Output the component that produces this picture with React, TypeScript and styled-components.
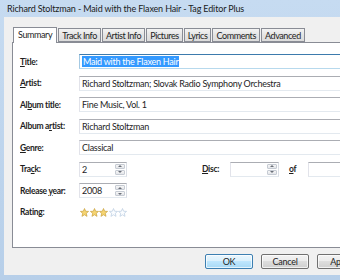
import styled, { createGlobalStyle } from 'styled-components';

const GlobalStyle = createGlobalStyle`
  html, body {
    margin: 0;
    padding: 0;
    width: 340px;
    height: 280px;
    overflow: hidden;
    background: #b9d1ea;
  }
  * { box-sizing: border-box; }
`;

const Window = styled.div`
  width: 340px;
  height: 280px;
  display: flex;
  flex-direction: column;
  overflow: hidden;
  background: linear-gradient(#c6dbf1, #b7cfe9);
  font-family: Lato, "Noto Sans", sans-serif;
  font-size: 9px;
  letter-spacing: -0.25px;
  color: #1e1e1e;
`;

const TitleBar = styled.div`
  height: 17px;
  flex: none;
  padding: 3px 0 0 7px;
  font-size: 9px;
  letter-spacing: -0.15px;
  color: #1b1b1b;
  white-space: nowrap;
`;

const Body = styled.div`
  margin-left: 4px;
  width: 400px;
  height: 258px;
  background: #f0f0f0;
  display: flex;
  flex-direction: column;
  padding: 9px 0 0 8px;
`;

const TabStrip = styled.div`
  display: flex;
  align-items: flex-end;
  height: 16px;
  padding-left: 1px;
  position: relative;
  z-index: 1;
`;

const Tab = styled.div<{ $active?: boolean }>`
  height: ${(p) => (p.$active ? '16px' : '14px')};
  margin-bottom: ${(p) => (p.$active ? '-1px' : '0')};
  margin-right: 1px;
  padding: ${(p) => (p.$active ? '1px 4px 0' : '1px 3px 0')};
  border: 1px solid #898c95;
  border-bottom: ${(p) => (p.$active ? 'none' : '1px solid #898c95')};
  background: ${(p) => (p.$active ? '#fff' : 'linear-gradient(#f3f3f3, #e4e4e4 50%, #dcdcdc)')};
  white-space: nowrap;
  line-height: 12px;
  letter-spacing: -0.4px;
  color: #1e1e1e;
`;

const Panel = styled.div`
  width: 380px;
  height: 206px;
  background: #fff;
  border: 1px solid #898c95;
  padding: 11px 0 0 7px;
`;

const Form = styled.div`
  display: grid;
  grid-template-columns: 59px 1fr;
  row-gap: 6.5px;
  align-items: center;
`;

const Label = styled.div`
  font-weight: 700;
  font-size: 8.5px;
  letter-spacing: -0.3px;
  color: #1e1e1e;
  white-space: nowrap;
  u { text-decoration: underline; }
`;

const Field = styled.div<{ $focused?: boolean }>`
  height: 15px;
  border: 1px solid ${(p) => (p.$focused ? '#3d7bad' : '#abadb3')};
  border-left-color: ${(p) => (p.$focused ? '#a4c9e3' : '#e2e3ea')};
  border-right-color: ${(p) => (p.$focused ? '#b5cfe7' : '#dbdfe6')};
  border-bottom-color: ${(p) => (p.$focused ? '#b7d9ed' : '#e3e9ef')};
  padding: 0 2px;
  line-height: 13px;
  white-space: nowrap;
  overflow: hidden;
  background: #fff;
`;

const Selected = styled.span`
  background: #3399ff;
  color: #fff;
  padding: 0 1px;
`;

const InlineRow = styled.div`
  display: flex;
  align-items: center;
`;

const Spinner = styled.div<{ $width: number }>`
  width: ${(p) => p.$width}px;
  height: 15px;
  flex: none;
  border: 1px solid #abadb3;
  border-left-color: #e2e3ea;
  border-right-color: #dbdfe6;
  border-bottom-color: #e3e9ef;
  display: flex;
  background: #fff;
`;

const SpinValue = styled.div`
  flex: 1;
  padding-left: 2px;
  line-height: 13px;
`;

const SpinButtons = styled.div`
  width: 11px;
  display: flex;
  flex-direction: column;
  padding: 1px 1px 1px 0;
  gap: 1px;
`;

const SpinButton = styled.div`
  flex: 1;
  border: 1px solid #c6cbd3;
  border-radius: 1px;
  background: linear-gradient(#f6f6f6, #e4e6ea);
  display: flex;
  align-items: center;
  justify-content: center;
`;

const Arrow = styled.div<{ $up?: boolean }>`
  width: 0;
  height: 0;
  border-left: 2px solid transparent;
  border-right: 2px solid transparent;
  ${(p) => (p.$up ? 'border-bottom: 2px solid #6a6f78;' : 'border-top: 2px solid #6a6f78;')}
`;

const SideLabel = styled(Label)<{ $left: number; $width: number }>`
  margin-left: ${(p) => p.$left}px;
  width: ${(p) => p.$width}px;
  flex: none;
`;

const Stars = styled.div`
  display: flex;
  gap: 0.6px;
  height: 15px;
  align-items: center;
  padding-left: 1px;
`;

const ButtonRow = styled.div`
  display: flex;
  gap: 8px;
  padding: 6px 0 0 193px;
`;

const Button = styled.div<{ $default?: boolean }>`
  width: 48px;
  height: 15px;
  border: 1px solid ${(p) => (p.$default ? '#3c7fb1' : '#707070')};
  border-radius: 2px;
  background: ${(p) =>
    p.$default
      ? 'linear-gradient(#eaf6fd, #d9f0fc 50%, #bee6fd 50%, #a7d9f5)'
      : 'linear-gradient(#f2f2f2, #ebebeb 50%, #dddddd 50%, #cfcfcf)'};
  box-shadow: inset 0 0 0 1px rgba(255, 255, 255, 0.7);
  text-align: center;
  line-height: 13px;
  flex: none;
`;

const Star = ({ on }: { on: boolean }) => (
  <svg width="9" height="9" viewBox="0 0 10 10">
    <polygon
      points="5,0.6 6.3,3.6 9.5,3.8 7,5.9 7.8,9.3 5,7.5 2.2,9.3 3,5.9 0.5,3.8 3.7,3.6"
      fill={on ? '#f6d572' : '#fbfdff'}
      stroke={on ? '#c9a13e' : '#b9cbe0'}
      strokeWidth="0.8"
      strokeLinejoin="round"
    />
  </svg>
);

const Spin = ({ value, width }: { value: string; width: number }) => (
  <Spinner $width={width}>
    <SpinValue>{value}</SpinValue>
    <SpinButtons>
      <SpinButton><Arrow $up /></SpinButton>
      <SpinButton><Arrow /></SpinButton>
    </SpinButtons>
  </Spinner>
);

const tabs = ['Summary', 'Track Info', 'Artist Info', 'Pictures', 'Lyrics', 'Comments', 'Advanced'];

export default function App() {
  return (
    <Window>
      <GlobalStyle />
      <TitleBar>Richard Stoltzman - Maid with the Flaxen Hair - Tag Editor Plus</TitleBar>
      <Body>
        <TabStrip>
          {tabs.map((t, i) => (
            <Tab key={t} $active={i === 0}>{t}</Tab>
          ))}
        </TabStrip>
        <Panel>
          <Form>
            <Label><u>T</u>itle:</Label>
            <Field $focused><Selected>Maid with the Flaxen Hair</Selected></Field>

            <Label><u>A</u>rtist:</Label>
            <Field>Richard Stoltzman; Slovak Radio Symphony Orchestra</Field>

            <Label>Al<u>b</u>um title:</Label>
            <Field>Fine Music, Vol. 1</Field>

            <Label>Album a<u>r</u>tist:</Label>
            <Field>Richard Stoltzman</Field>

            <Label><u>G</u>enre:</Label>
            <Field>Classical</Field>

            <Label>Tra<u>c</u>k:</Label>
            <InlineRow>
              <Spin value="2" width={48} />
              <SideLabel $left={75} $width={28}><u>D</u>isc:</SideLabel>
              <Spin value="" width={49} />
              <SideLabel $left={10} $width={19}><u>o</u>f</SideLabel>
              <Spin value="" width={49} />
            </InlineRow>

            <Label>Release <u>y</u>ear:</Label>
            <InlineRow>
              <Spin value="2008" width={48} />
            </InlineRow>

            <Label>Rating:</Label>
            <Stars>
              {[1, 2, 3, 4, 5].map((n) => (
                <Star key={n} on={n <= 3} />
              ))}
            </Stars>
          </Form>
        </Panel>
        <ButtonRow>
          <Button $default>OK</Button>
          <Button>Cancel</Button>
          <Button>Apply</Button>
        </ButtonRow>
      </Body>
    </Window>
  );
}
